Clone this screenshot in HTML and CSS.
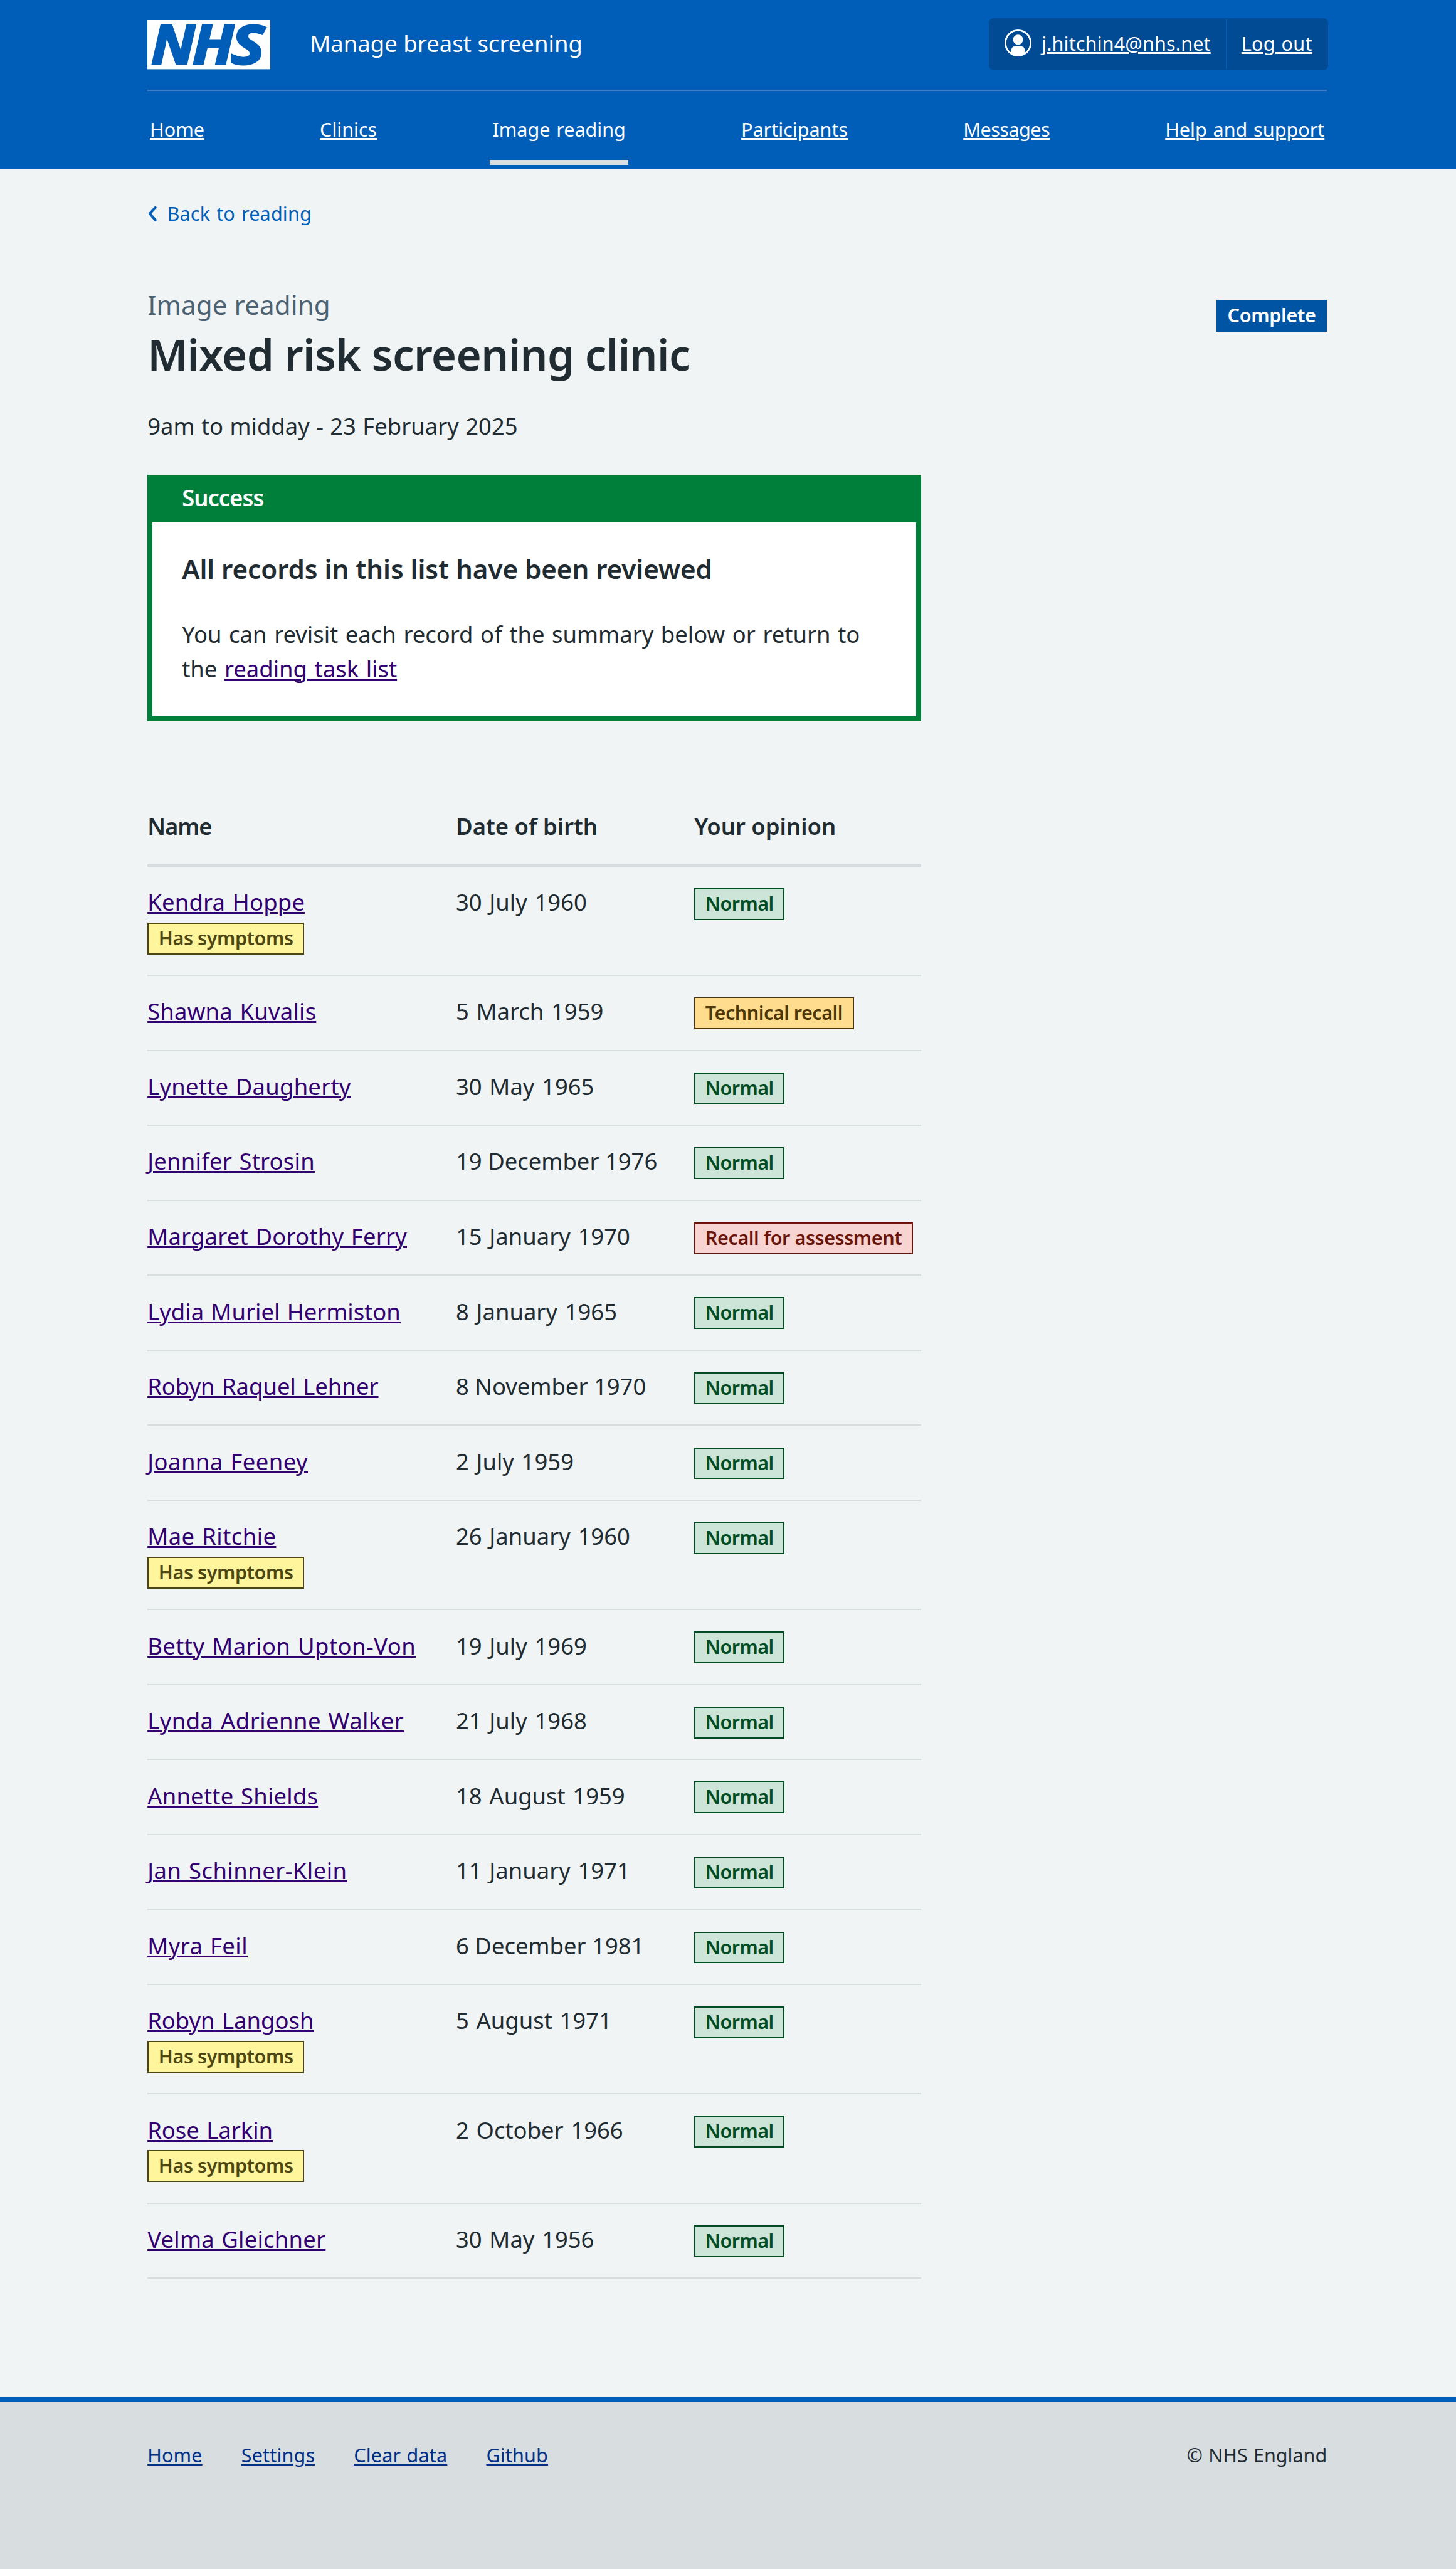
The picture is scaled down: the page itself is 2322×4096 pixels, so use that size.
FILE: index.html
```html
<!DOCTYPE html>
<html lang="en">
<head>
<meta charset="utf-8">
<title>Mixed risk screening clinic</title>
<link rel="stylesheet" href="styles.css">
</head>
<body>
<header class="header">
  <div class="header-top">
    <svg class="logo" viewBox="0 0 200 80" role="img" aria-label="NHS">
      <rect width="200" height="80" fill="#fff"/>
      <g class="logo-text">
        <text x="6" y="71.200" textLength="71" lengthAdjust="spacingAndGlyphs">N</text>
        <text x="73.500" y="71.200" textLength="67" lengthAdjust="spacingAndGlyphs">H</text>
        <text x="136" y="71.200" textLength="55" lengthAdjust="spacingAndGlyphs">S</text>
      </g>
    </svg>
    <span class="service">Manage breast screening</span>
    <div class="account">
      <div class="account-user">
        <svg class="account-icon" viewBox="0 0 44 44" aria-hidden="true">
          <circle cx="22" cy="22" r="20.6" fill="none" stroke="#fff" stroke-width="2.8"/>
          <circle cx="22" cy="16.6" r="8.2" fill="#fff"/>
          <path d="M11 40V34.5Q11 27 18.500 27H25.500Q33 27 33 34.500V40Q28 43.500 22 43.500T11 40Z" fill="#fff"/>
        </svg>
        <a href="#">j.hitchin4@nhs.net</a>
      </div>
      <a class="account-logout" href="#">Log out</a>
    </div>
  </div>
  <nav class="nav">
    <a href="#">Home</a>
    <a href="#">Clinics</a>
    <a class="current" href="#">Image reading</a>
    <a href="#">Participants</a>
    <a class="messages" href="#">Messages</a>
    <a href="#">Help and support</a>
  </nav>
</header>
<main class="main">
  <a class="back" href="#">
    <svg class="back-icon" viewBox="0 0 16 26" aria-hidden="true"><path d="M13 3L4 13L13 23" fill="none" stroke="#005eb8" stroke-width="4.200" stroke-linecap="round" stroke-linejoin="round"/></svg>
    <span>Back to reading</span>
  </a>
  <div class="title-row">
    <h1 class="title"><span class="caption">Image reading</span><span class="title-text">Mixed risk screening clinic</span></h1>
    <strong class="tag tag-blue">Complete</strong>
  </div>
  <p class="session">9am to midday - 23 February 2025</p>
  <section class="banner">
    <h2 class="banner-header">Success</h2>
    <div class="banner-body">
      <h3 class="banner-title">All records in this list have been reviewed</h3>
      <p class="banner-text">You can revisit each record of the summary below or return to<br>the <a href="#">reading task list</a></p>
    </div>
  </section>
  <table class="table">
    <thead><tr><th class="name">Name</th><th>Date of birth</th><th>Your opinion</th></tr></thead>
    <tbody>
      <tr class="tall"><td><a href="#">Kendra Hoppe</a><strong class="tag tag-yellow">Has symptoms</strong></td><td>30 July 1960</td><td><strong class="tag tag-green">Normal</strong></td></tr>
      <tr><td><a href="#">Shawna Kuvalis</a></td><td>5 March 1959</td><td><strong class="tag tag-orange">Technical recall</strong></td></tr>
      <tr><td><a href="#">Lynette Daugherty</a></td><td>30 May 1965</td><td><strong class="tag tag-green">Normal</strong></td></tr>
      <tr><td><a href="#">Jennifer Strosin</a></td><td class="long-date">19 December 1976</td><td><strong class="tag tag-green">Normal</strong></td></tr>
      <tr><td><a href="#">Margaret Dorothy Ferry</a></td><td>15 January 1970</td><td><strong class="tag tag-red">Recall for assessment</strong></td></tr>
      <tr><td><a class="snug" href="#">Lydia Muriel Hermiston</a></td><td>8 January 1965</td><td><strong class="tag tag-green">Normal</strong></td></tr>
      <tr><td><a class="snug" href="#">Robyn Raquel Lehner</a></td><td class="long-date">8 November 1970</td><td><strong class="tag tag-green">Normal</strong></td></tr>
      <tr><td><a class="wide" href="#">Joanna Feeney</a></td><td>2 July 1959</td><td><strong class="tag tag-green">Normal</strong></td></tr>
      <tr class="tall"><td><a class="wide" href="#">Mae Ritchie</a><strong class="tag tag-yellow">Has symptoms</strong></td><td>26 January 1960</td><td><strong class="tag tag-green">Normal</strong></td></tr>
      <tr><td><a class="wide" href="#">Betty Marion Upton-Von</a></td><td>19 July 1969</td><td><strong class="tag tag-green">Normal</strong></td></tr>
      <tr><td><a class="wide" href="#">Lynda Adrienne Walker</a></td><td>21 July 1968</td><td><strong class="tag tag-green">Normal</strong></td></tr>
      <tr><td><a href="#">Annette Shields</a></td><td>18 August 1959</td><td><strong class="tag tag-green">Normal</strong></td></tr>
      <tr><td><a class="wide" href="#">Jan Schinner-Klein</a></td><td>11 January 1971</td><td><strong class="tag tag-green">Normal</strong></td></tr>
      <tr><td><a class="wide" href="#">Myra Feil</a></td><td class="long-date">6 December 1981</td><td><strong class="tag tag-green">Normal</strong></td></tr>
      <tr class="tall"><td><a class="snug" href="#">Robyn Langosh</a><strong class="tag tag-yellow">Has symptoms</strong></td><td>5 August 1971</td><td><strong class="tag tag-green">Normal</strong></td></tr>
      <tr class="tall"><td><a class="snug" href="#">Rose Larkin</a><strong class="tag tag-yellow">Has symptoms</strong></td><td>2 October 1966</td><td><strong class="tag tag-green">Normal</strong></td></tr>
      <tr><td><a href="#">Velma Gleichner</a></td><td>30 May 1956</td><td><strong class="tag tag-green">Normal</strong></td></tr>
    </tbody>
  </table>
</main>
<footer class="footer">
  <nav class="footer-links"><a href="#">Home</a><a href="#">Settings</a><a href="#">Clear data</a><a href="#">Github</a></nav>
  <span>© NHS England</span>
</footer>
</body>
</html>
```
FILE: styles.css
```css
/* 1rem is 10 design pixels */
html { font-size: 19.596px; }
* { box-sizing: border-box; }
body {
  margin: 0;
  height: 4096px;
  display: flex;
  flex-direction: column;
  background: #f0f4f5;
  color: #212b32;
  font-family: "Noto Sans", "Open Sans", sans-serif;
  font-size: 1.86rem;
  line-height: 2.8rem;
}
h1, h2, h3, p { margin: 0; font-weight: inherit; font-size: inherit; }
a { text-decoration-thickness: 3px; text-underline-offset: 0.11rem; }

.header { height: 13.8rem; background: #005eb8; color: #fff; padding: 0 10.5rem 0 12rem; flex: none; }
.header a { color: #fff; }
.header-top { height: 7.4rem; border-bottom: 2px solid #407ec9; display: flex; align-items: flex-start; }
.logo { width: 10rem; height: 4rem; margin-top: 1.65rem; flex: none; overflow: visible; }
.logo-text { font: italic 700 87.5px "Open Sans", sans-serif; fill: #005eb8; stroke: #005eb8; stroke-width: 3.2px; }
.service { margin: 2.13rem 0 0 3.22rem; letter-spacing: 0.001em; }
.account {
  margin: 1.5rem -0.1rem 0 auto;
  height: 4.2rem;
  display: flex;
  background: #004b93;
  border-radius: 0.4rem;
  font-size: 1.56rem;
  line-height: 2.8rem;
}
.account-user { display: flex; padding: 0.63rem 1.25rem 0 1.3rem; letter-spacing: 0.005em; }
.account-icon { width: 2.2rem; height: 2.2rem; margin: 0.27rem 0.8rem 0 0; }
.account-logout { padding: 0.53rem 1.3rem 0 1.15rem; margin-top: 0.1rem; height: 4rem; border-left: 2px solid #005eb8; letter-spacing: 0.01em; word-spacing: 0.04em; }

.nav { height: 6.4rem; display: flex; justify-content: space-between; font-size: 1.56rem; line-height: 2.8rem; word-spacing: 0.06em; }
.nav a { padding: 1.75rem 0.2rem 0; height: 6rem; }
.nav .current { text-decoration: none; border-bottom: 8px solid #d8dde0; }
.nav .messages { letter-spacing: -0.017em; }

.main { padding: 0 0 0 12rem; width: 108rem; flex: 1; }
.back { display: flex; color: #005eb8; text-decoration: none; font-size: 1.56rem; margin-top: 2.15rem; height: 2.8rem; letter-spacing: 0.006em; word-spacing: 0.06em; }
.back-icon { width: 0.8rem; height: 1.3rem; margin: 0.8rem 0.8rem 0 0; }
.title-row { display: flex; justify-content: space-between; align-items: flex-start; margin-top: 4.45rem; }
.title { display: flex; flex-direction: column; }
.caption { font-size: 2.15rem; line-height: 3.2rem; color: #4c6272; letter-spacing: 0.002em; }
.title-text { margin-top: 0.19rem; font-size: 3.52rem; line-height: 4.4rem; font-weight: 600; letter-spacing: -0.009em; }
.session { margin-top: 2.28rem; word-spacing: 0.025em; }

.tag { display: block; width: max-content; height: 2.6rem; padding: 0 0.8rem; border: 2px solid; font-size: 1.56rem; line-height: 2.29rem; font-weight: 600; letter-spacing: -0.014em; }
.tag-blue { margin-top: 1.2rem; background: #0054a4; border-color: #0054a4; color: #fff; letter-spacing: -0.01em; }
.tag-green { background: #cce5d8; border-color: #004c23; color: #004c23; letter-spacing: -0.018em; }
.tag-yellow { background: #fff59d; border-color: #4d4712; color: #4d4712; }
.tag-orange { background: #ffdc8e; border-color: #4d3708; color: #4d3708; letter-spacing: -0.016em; }
.tag-red { background: #f7d4d1; border-color: #6a140b; color: #6a140b; }

.banner { width: 62.95rem; height: 20.1rem; margin-top: 2.54rem; border: 8px solid #007f3b; border-top: 0; background: #fff; }
.banner-header { height: 3.9rem; padding: 0.5rem 2.4rem 0; background: #007f3b; color: #fff; font-weight: 600; letter-spacing: -0.027em; }
.banner-body { padding: 2.3rem 2.4rem 0; }
.banner-title { font-size: 2.15rem; line-height: 3rem; font-weight: 600; letter-spacing: -0.001em; }
.banner-text { margin-top: 2.4rem; word-spacing: 0.058em; }
.banner-text a, .table a { color: #330072; }

.table, .table thead, .table tbody { display: block; }
.table { width: 62.95rem; margin-top: 6rem; }
.table tr { display: grid; grid-template-columns: 25.1rem 19.4rem 1fr; height: 6.1rem; border-bottom: 2px solid #d8dde0; }
.table thead tr { height: 5.8rem; border-bottom-width: 4px; }
.table .tall { height: 8.9rem; }
.table th, .table td { display: block; padding: 1.5rem 0 0; text-align: left; }
.table th { padding-top: 1.1rem; font-weight: 600; }
.table .name { letter-spacing: -0.028em; }
.table td { word-spacing: 0.06em; }
.table td:last-child { padding-top: 1.75rem; }
.table .long-date { word-spacing: 0; }
.table td > a { letter-spacing: 0.006em; word-spacing: 0.05em; }
.table td > .wide { letter-spacing: 0.012em; }
.table td > .snug { letter-spacing: 0; }
.table .tag { word-spacing: 0; }
.tag-yellow { margin-top: 0.25rem; }

.footer { flex: none; height: 14rem; border-top: 8px solid #005eb8; background: #d8dde0; padding: 2.95rem 10.5rem 0 12rem; display: flex; justify-content: space-between; font-size: 1.56rem; word-spacing: 0.04em; }
.footer-links { display: flex; gap: 3.17rem; letter-spacing: 0.005em; }
.footer a { color: #003087; }
```
